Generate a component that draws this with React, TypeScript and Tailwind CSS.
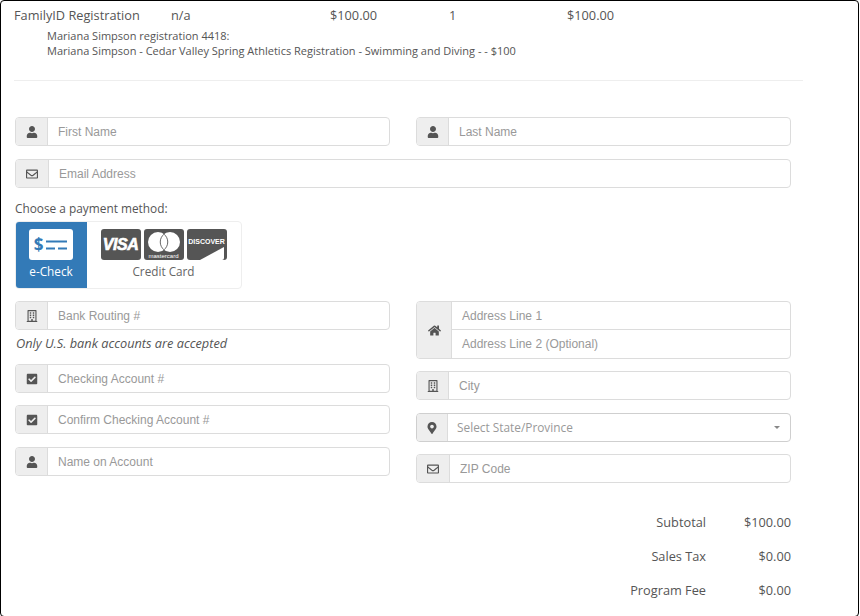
import { FaUser, FaRegEnvelope, FaRegBuilding, FaCheckSquare, FaHome, FaMapMarkerAlt } from "react-icons/fa";
import type { ReactNode } from "react";

const sans = "[font-family:'Open_Sans',sans-serif]";

function Field({ icon, label, addon, className = "" }: { icon: ReactNode; label: string; addon: string; className?: string }) {
  return (
    <div className={`flex h-[29px] rounded border border-[#dcdcdc] overflow-hidden ${className}`}>
      <div className={`flex items-center justify-center bg-[#eeeeee] border-r border-[#dcdcdc] text-[#555555] text-[12px] shrink-0 ${addon}`}>{icon}</div>
      <div className="flex-1 flex items-center pl-[10px] text-[12px] text-[#999999] font-['Liberation_Sans',sans-serif]">{label}</div>
    </div>
  );
}

function Visa() {
  return (
    <div className="w-[40px] h-[31px] rounded-[3px] bg-[#555555] flex items-center justify-center text-white text-[16px] font-bold italic leading-none tracking-tight [-webkit-text-stroke:0.6px_white] font-['Liberation_Sans',sans-serif]">
      VISA
    </div>
  );
}

function Master() {
  return (
    <div className="w-[40px] h-[31px] rounded-[3px] bg-[#555555] flex flex-col items-center text-white leading-none">
      <svg width="34" height="22" viewBox="0 0 34 22" className="mt-[2px]">
        <circle cx="11" cy="11" r="10" fill="#fff" />
        <circle cx="23" cy="11" r="10" fill="#fff" />
        <path d="M17 3.2a10 10 0 0 1 0 15.6a10 10 0 0 1 0-15.6z" fill="#fff" stroke="#555" strokeWidth="0.9" />
      </svg>
      <span className="text-[6px] font-['Liberation_Sans',sans-serif]">mastercard</span>
    </div>
  );
}

function Discover() {
  return (
    <div className="relative w-[40px] h-[31px] rounded-[3px] bg-[#555555] overflow-hidden text-white">
      <div className="text-[7px] font-bold leading-none mt-[9px] text-center font-['Liberation_Sans',sans-serif]">DISCOVER</div>
      <svg width="40" height="31" viewBox="0 0 40 31" className="absolute inset-0">
        <path d="M13 31 L37 18 V29 Q37 31 35 31 Z" fill="#fff" />
      </svg>
    </div>
  );
}

export default function App() {
  return (
    <div className="w-[860px] h-[616px] bg-white overflow-hidden">
      <div className={`w-[859px] h-[617px] border border-black rounded-[4px] overflow-hidden text-[#555555] ${sans}`}>
        <div className="flex pl-[13px] pt-[5px] text-[12.75px] leading-[18px]">
          <div className="w-[157px]">FamilyID Registration</div>
          <div className="w-[159px]">n/a</div>
          <div className="w-[119px]">$100.00</div>
          <div className="w-[118px]">1</div>
          <div>$100.00</div>
        </div>
        <div className="pl-[46px] pt-[4px] text-[11px] leading-[15px] text-[#555555]">
          <div>Mariana Simpson registration 4418:</div>
          <div>Mariana Simpson - Cedar Valley Spring Athletics Registration - Swimming and Diving - - $100</div>
        </div>
        <div className="ml-[13px] w-[789px] mt-[22px] border-t border-[#eeeeee]" />

        <div className="pl-[14px] w-[790px] pt-[36px]">
          <div className="flex gap-[26px]">
            <Field className="flex-1" icon={<FaUser />} label="First Name" addon="w-[32px]" />
            <Field className="flex-1" icon={<FaUser />} label="Last Name" addon="w-[32px]" />
          </div>
          <Field className="mt-[13px]" icon={<FaRegEnvelope />} label="Email Address" addon="w-[33px]" />

          <div className="mt-[12px] text-[11.85px] leading-[17px]">Choose a payment method:</div>
          <div className="mt-[4px] flex w-[227px] h-[68px] rounded border border-[#eeeeee] overflow-hidden">
            <div className="w-[72px] -ml-px -my-px h-[68px] bg-[#337ab7] flex flex-col items-center text-white shrink-0">
              <div className="mt-[8px] mr-[1px] w-[44px] h-[31px] bg-white rounded-[3px] flex items-center justify-center gap-[3px] text-[#337ab7]">
                <span className="text-[17px] font-bold leading-none">$</span>
                <svg width="21" height="12" viewBox="0 0 21 12">
                  <rect x="0" y="1.5" width="21" height="2" fill="#337ab7" />
                  <rect x="0" y="8.5" width="9" height="2" fill="#337ab7" />
                  <rect x="12" y="8.5" width="9" height="2" fill="#337ab7" />
                </svg>
              </div>
              <div className="mt-[3px] text-[11.75px] leading-[16px]">e-Check</div>
            </div>
            <div className="flex-1 flex flex-col items-center pr-[1px]">
              <div className="flex gap-[3px] mt-[7px]">
                <Visa />
                <Master />
                <Discover />
              </div>
              <div className="mt-[3px] text-[11.75px] leading-[16px] text-[#666666]">Credit Card</div>
            </div>
          </div>

          <div className="flex gap-[26px] mt-[12px]">
            <div className="flex-1 min-w-0">
              <Field icon={<FaRegBuilding />} label="Bank Routing #" addon="w-[32px]" />
              <div className="mt-[4px] pl-[1px] text-[12.75px] leading-[18px] italic">Only U.S. bank accounts are accepted</div>
              <Field className="mt-[12px]" icon={<FaCheckSquare />} label="Checking Account #" addon="w-[32px]" />
              <Field className="mt-[12px]" icon={<FaCheckSquare />} label="Confirm Checking Account #" addon="w-[32px]" />
              <Field className="mt-[13px]" icon={<FaUser />} label="Name on Account" addon="w-[32px]" />
            </div>
            <div className="flex-1 min-w-0">
              <div className="flex h-[58px] rounded border border-[#dcdcdc] overflow-hidden">
                <div className="w-[35px] flex items-center justify-center bg-[#eeeeee] border-r border-[#dcdcdc] text-[#555555] text-[13px] shrink-0"><FaHome /></div>
                <div className="flex-1 flex flex-col text-[12px] text-[#999999] font-['Liberation_Sans',sans-serif]">
                  <div className="h-[28px] flex items-center pl-[10px] border-b border-[#dcdcdc]">Address Line 1</div>
                  <div className="flex-1 flex items-center pl-[10px]">Address Line 2 (Optional)</div>
                </div>
              </div>
              <Field className="mt-[12px]" icon={<FaRegBuilding />} label="City" addon="w-[32px]" />
              <div className="mt-[13px] flex h-[29px] rounded border border-[#cfcfcf] overflow-hidden">
                <div className="w-[31px] flex items-center justify-center bg-[#eeeeee] border-r border-[#dcdcdc] text-[#555555] text-[12px] shrink-0"><FaMapMarkerAlt /></div>
                <div className="flex-1 flex items-center justify-between pl-[9px] pr-[10px] text-[11.85px] text-[#999999]">
                  <span>Select State/Province</span>
                  <span className="w-0 h-0 border-x-[3px] border-x-transparent border-t-[3px] border-t-[#888888]" />
                </div>
              </div>
              <Field className="mt-[12px]" icon={<FaRegEnvelope />} label="ZIP Code" addon="w-[33px]" />
            </div>
          </div>

          <div className="mt-[30px] flex flex-col items-end gap-[16px] text-[12.75px] leading-[18px]">
            {[["Subtotal", "$100.00"], ["Sales Tax", "$0.00"], ["Program Fee", "$0.00"]].map(([a, b]) => (
              <div key={a} className="flex">
                <div className="text-right">{a}</div>
                <div className="w-[85px] text-right">{b}</div>
              </div>
            ))}
          </div>
        </div>
      </div>
    </div>
  );
}
